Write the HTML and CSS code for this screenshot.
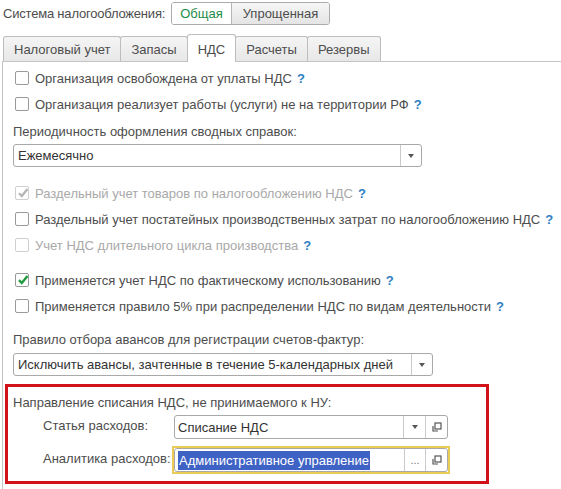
FILE: index.html
```html
<!DOCTYPE html>
<html>
<head>
    <title>Настройки налогов</title>
    <link rel="stylesheet" href="styles.css">
</head>
<body>
    <div class="tax-system">
        <span class="tax-label">Система налогообложения:</span>
        <div class="toggle">
            <span class="toggle-item active">Общая</span>
            <span class="toggle-item">Упрощенная</span>
        </div>
    </div>

    <div class="tabs">
        <div class="tab">Налоговый учет</div>
        <div class="tab">Запасы</div>
        <div class="tab active">НДС</div>
        <div class="tab">Расчеты</div>
        <div class="tab">Резервы</div>
    </div>

    <div class="panel">
        <div class="content">
            <label class="check-row">
                <span class="box"></span>
                <span>Организация освобождена от уплаты НДС</span>
                <span class="hint">?</span>
            </label>
            <label class="check-row">
                <span class="box"></span>
                <span>Организация реализует работы (услуги) не на территории РФ</span>
                <span class="hint">?</span>
            </label>

            <div class="field-label first">Периодичность оформления сводных справок:</div>
            <div class="combo combo-period">
                <span class="combo-value">Ежемесячно</span>
                <span class="combo-btn"><span class="arrow"></span></span>
            </div>

            <label class="check-row gap-combo disabled">
                <span class="box">
                    <svg width="14" height="14" viewBox="0 0 14 14"><path d="M3 7.2 L5.8 10 L11.5 3" fill="none" stroke="#b5b5b5" stroke-width="2.2"/></svg>
                </span>
                <span>Раздельный учет товаров по налогообложению НДС</span>
                <span class="hint">?</span>
            </label>
            <label class="check-row">
                <span class="box"></span>
                <span>Раздельный учет постатейных производственных затрат по налогообложению НДС</span>
                <span class="hint">?</span>
            </label>
            <label class="check-row disabled">
                <span class="box"></span>
                <span>Учет НДС длительного цикла производства</span>
                <span class="hint">?</span>
            </label>

            <label class="check-row gap-group">
                <span class="box">
                    <svg width="14" height="14" viewBox="0 0 14 14"><path d="M3 7.2 L5.8 10 L11.5 3" fill="none" stroke="#1f9a3c" stroke-width="2.4"/></svg>
                </span>
                <span>Применяется учет НДС по фактическому использованию</span>
                <span class="hint">?</span>
            </label>
            <label class="check-row">
                <span class="box"></span>
                <span>Применяется правило 5% при распределении НДС по видам деятельности</span>
                <span class="hint">?</span>
            </label>

            <div class="field-label second">Правило отбора авансов для регистрации счетов-фактур:</div>
            <div class="combo combo-advance">
                <span class="combo-value">Исключить авансы, зачтенные в течение 5-календарных дней</span>
                <span class="combo-btn"><span class="arrow"></span></span>
            </div>
        </div>

        <div class="highlight">
            <div class="group-title">Направление списания НДС, не принимаемого к НУ:</div>
            <div class="form-grid">
                <span class="form-label">Статья расходов:</span>
                <div class="field-wrap">
                    <div class="combo combo-ref">
                        <span class="combo-value">Списание НДС</span>
                        <span class="combo-btn"><span class="arrow"></span></span>
                        <span class="combo-btn open">
                            <svg width="11" height="11" viewBox="0 0 11 11"><rect x="4" y="1" width="6" height="6" fill="none" stroke="#555" stroke-width="1.2"/><path d="M2 4 V9 H7" fill="none" stroke="#555" stroke-width="1.2"/></svg>
                        </span>
                    </div>
                </div>

                <span class="form-label">Аналитика расходов:</span>
                <div class="field-wrap focused">
                    <div class="combo combo-ref">
                        <span class="combo-value"><span class="selected">Административное управление</span></span>
                        <span class="combo-btn dots">...</span>
                        <span class="combo-btn open">
                            <svg width="11" height="11" viewBox="0 0 11 11"><rect x="4" y="1" width="6" height="6" fill="none" stroke="#555" stroke-width="1.2"/><path d="M2 4 V9 H7" fill="none" stroke="#555" stroke-width="1.2"/></svg>
                        </span>
                    </div>
                </div>
            </div>
        </div>
    </div>
</body>
</html>
```

FILE: styles.css
```css
body {
    font-family: "Liberation Sans", Arial, sans-serif;
    font-size: 13px;
    color: #4d4d4d;
    background-color: #fff;
    margin: 0;
    padding: 2px 0 0 2px;
    overflow: hidden;
}

/* Система налогообложения */
.tax-system {
    display: flex;
    align-items: center;
    height: 23px;
    margin-left: 1px;
}

.tax-label {
    margin-right: 6px;
    letter-spacing: -0.2px;
}

.toggle {
    display: flex;
    height: 23px;
    border: 1px solid #ababab;
    border-radius: 3px;
    box-sizing: border-box;
    overflow: hidden;
}

.toggle-item {
    display: flex;
    align-items: center;
    padding: 0 11px;
    background: linear-gradient(#f6f6f6, #e4e4e4);
}

.toggle-item + .toggle-item {
    border-left: 1px solid #b5b5b5;
}

.toggle-item.active {
    background: #fff;
    color: #1e8c47;
    padding: 0 8px;
}

/* Вкладки */
.tabs {
    display: flex;
    align-items: flex-end;
    height: 27px;
    margin-top: 9px;
    margin-left: 1px;
    position: relative;
    z-index: 1;
}

.tab {
    display: flex;
    align-items: center;
    height: 25px;
    box-sizing: border-box;
    padding: 0 10px;
    border: 1px solid #bdbdbd;
    border-bottom: none;
    border-radius: 3px 3px 0 0;
    background: linear-gradient(#f5f5f5, #e7e7e7);
}

.tab + .tab {
    margin-left: -1px;
}

.tab.active {
    height: 28px;
    margin-bottom: -1px;
    background: #fff;
    padding-top: 2px;
}

/* Панель НДС */
.panel {
    width: 600px;
    border-top: 1px solid #c4c4c4;
    border-left: 1px solid #c4c4c4;
    padding: 3px 0 40px 2px;
}

.content {
    padding-left: 8px;
}

.check-row {
    display: flex;
    align-items: center;
    height: 26px;
    white-space: nowrap;
}

.check-row.gap-combo {
    margin-top: 13px;
}

.check-row.gap-group {
    margin-top: 9px;
}

.box {
    width: 14px;
    height: 14px;
    box-sizing: border-box;
    border: 1px solid #9a9a9a;
    border-radius: 2px;
    background: #fff;
    margin: 0 6px 0 2px;
    display: flex;
    align-items: center;
    justify-content: center;
    flex: none;
}

.box svg {
    margin: -1px -2px 0 0;
}

.check-row.disabled {
    color: #a9a9a9;
}

.check-row.disabled .box {
    border-color: #cfcfcf;
}

.hint {
    color: #2f80c4;
    font-weight: bold;
    margin-left: 5px;
}

.field-label {
    height: 22px;
    line-height: 22px;
}

.field-label.first {
    margin-top: 4px;
}

.field-label.second {
    margin-top: 10px;
}

/* Поля выбора */
.combo {
    display: flex;
    height: 23px;
    box-sizing: border-box;
    border: 1px solid #a9a9a9;
    border-radius: 3px;
    background: #fff;
    color: #333;
}

.combo-value {
    flex: 1;
    display: flex;
    align-items: center;
    padding-left: 4px;
    white-space: nowrap;
    overflow: hidden;
}

.combo-btn {
    width: 20px;
    display: flex;
    align-items: center;
    justify-content: center;
    border-left: 1px solid #cacaca;
}

.arrow {
    width: 0;
    height: 0;
    border-left: 3px solid transparent;
    border-right: 3px solid transparent;
    border-top: 4px solid #555;
}

.combo-period {
    width: 409px;
    margin-top: 1px;
}

.combo-advance {
    width: 420px;
    margin-top: 2px;
}

/* Выделенная группа */
.highlight {
    width: 484px;
    box-sizing: border-box;
    margin-top: 8px;
    border: 3px solid #d2121b;
    padding: 6px 0 7px 5px;
}

.group-title {
    height: 20px;
    line-height: 20px;
}

.form-grid {
    display: grid;
    grid-template-columns: 129px 278px;
    row-gap: 5px;
    align-items: center;
    margin-left: 30px;
}

.form-label {
    padding-bottom: 3px;
}

.field-wrap {
    border: 2px solid transparent;
}

.field-wrap.focused {
    border-color: #ebcb55;
}

.combo-ref {
    height: 24px;
}

.combo-ref .combo-value {
    padding-left: 3px;
}

.combo-ref .combo-btn {
    width: 21px;
}

.combo-btn.dots {
    align-items: flex-end;
    padding-bottom: 5px;
    box-sizing: border-box;
    color: #777;
    font-size: 11px;
    line-height: 1;
}

.selected {
    background: #3f62c5;
    color: #fff;
    padding: 2px 1px;
}
```
